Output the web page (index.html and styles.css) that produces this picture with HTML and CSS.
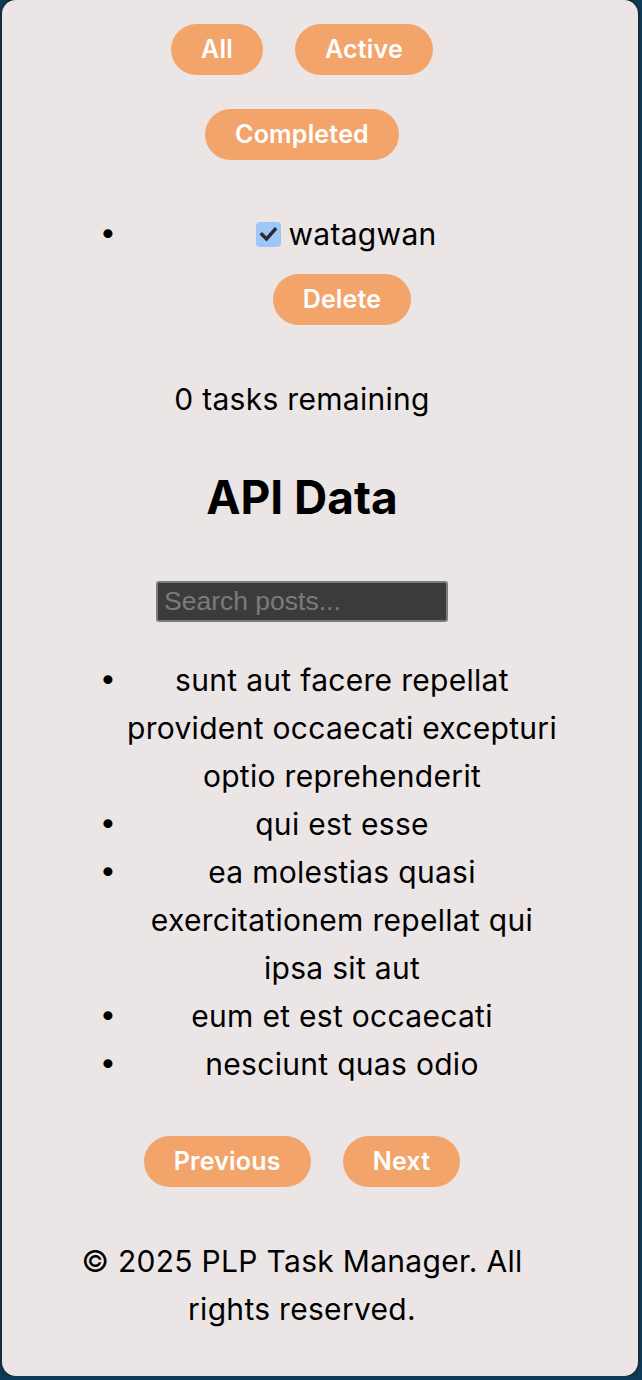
FILE: index.html
```html
<!DOCTYPE html>
<html lang="en">
<head>
<meta charset="utf-8">
<title>PLP Task Manager</title>
<link rel="stylesheet" href="styles.css">
</head>
<body>
<div class="card">
  <main class="content">
    <div class="filters">
      <button class="btn">All</button>
      <button class="btn">Active</button>
      <button class="btn">Completed</button>
    </div>

    <ul class="todo-list">
      <li class="todo-item">
        <label class="todo-label"><span class="check"><svg viewBox="0 0 25 25" width="25" height="25"><path d="M6 12.5 L10.5 17 L19 7.5" fill="none" stroke="#2b2b2b" stroke-width="3.4" stroke-linecap="square"/></svg></span><span class="todo-text">watagwan</span></label>
        <button class="btn delete">Delete</button>
      </li>
    </ul>

    <p class="remaining">0 tasks remaining</p>

    <h2 class="api-title">API Data</h2>

    <div class="search-row">
      <input class="search" type="text" placeholder="Search posts...">
    </div>

    <ul class="posts">
      <li>sunt aut facere repellat provident occaecati excepturi optio reprehenderit</li>
      <li>qui est esse</li>
      <li>ea molestias quasi exercitationem repellat qui ipsa sit aut</li>
      <li>eum et est occaecati</li>
      <li>nesciunt quas odio</li>
    </ul>

    <div class="pager">
      <button class="btn">Previous</button>
      <button class="btn">Next</button>
    </div>

    <footer class="footer">© 2025 PLP Task Manager. All rights reserved.</footer>
  </main>
</div>
</body>
</html>
```

FILE: styles.css
```css
* { box-sizing: border-box; }

html, body {
  margin: 0;
  padding: 0;
}

body {
  background: #0d3b59;
  font-family: Inter, "Noto Sans", sans-serif;
  color: #000;
}

.card {
  margin-left: 2px;
  width: 636px;
  height: 1376px;
  background: #ebe5e6;
  border-radius: 14px;
  box-shadow: 0 0 3px 1px #1e1e1e;
  overflow: hidden;
}

.content {
  margin-left: 38px;
  width: 524px;
  padding-top: 24px;
  text-align: center;
  font-size: 30px;
  letter-spacing: 0.3px;
  line-height: 48px;
}

.btn {
  font-family: Inter, "Noto Sans", sans-serif;
  font-size: 25px;
  font-weight: 600;
  letter-spacing: 0.2px;
  color: #fff;
  background: #f2a46a;
  border: none;
  border-radius: 26px;
  height: 51px;
  padding: 0 30px;
  line-height: 51px;
  cursor: pointer;
}

.filters {
  width: 292px;
  margin: 0 auto;
  display: flex;
  flex-wrap: wrap;
  justify-content: center;
  column-gap: 32px;
  row-gap: 34px;
}

.todo-list,
.posts {
  list-style: disc;
  padding-left: 80px;
}

.todo-list li::marker,
.posts li::marker {
  content: "\2022\200A";
  font-family: "DejaVu Sans", sans-serif;
  font-size: 31px;
  letter-spacing: 0;
}

.todo-list {
  margin: 50px 0 0 0;
}

.todo-label {
  display: block;
  padding-left: 9px;
}

.check {
  display: inline-block;
  vertical-align: -2px;
  width: 25px;
  height: 25px;
  margin-right: 7px;
  background: #9ec7f7;
  border-radius: 4px;
}

.check svg { display: block; }

.delete {
  display: block;
  margin: 16px auto 0;
}

.remaining {
  margin: 50px 0 0 0;
}

.api-title {
  font-size: 46px;
  font-weight: 700;
  letter-spacing: 0;
  line-height: 56px;
  margin: 46px 0 0 0;
}

.search-row {
  margin-top: 56px;
  display: flex;
  justify-content: center;
}

.search {
  width: 292px;
  height: 41px;
  background: #3b3b3b;
  border: 2px solid #7b7b7b;
  border-radius: 3px;
  font-family: "Liberation Sans", Arial, sans-serif;
  font-size: 26.5px;
  letter-spacing: 0;
  color: #ddd;
  padding: 0 6px;
}

.search::placeholder { color: #7b7b7b; }

.posts {
  margin: 34px 0 0 0;
}

.pager {
  margin-top: 48px;
  display: flex;
  justify-content: center;
  gap: 32px;
}

.footer {
  margin-top: 50px;
}
```
